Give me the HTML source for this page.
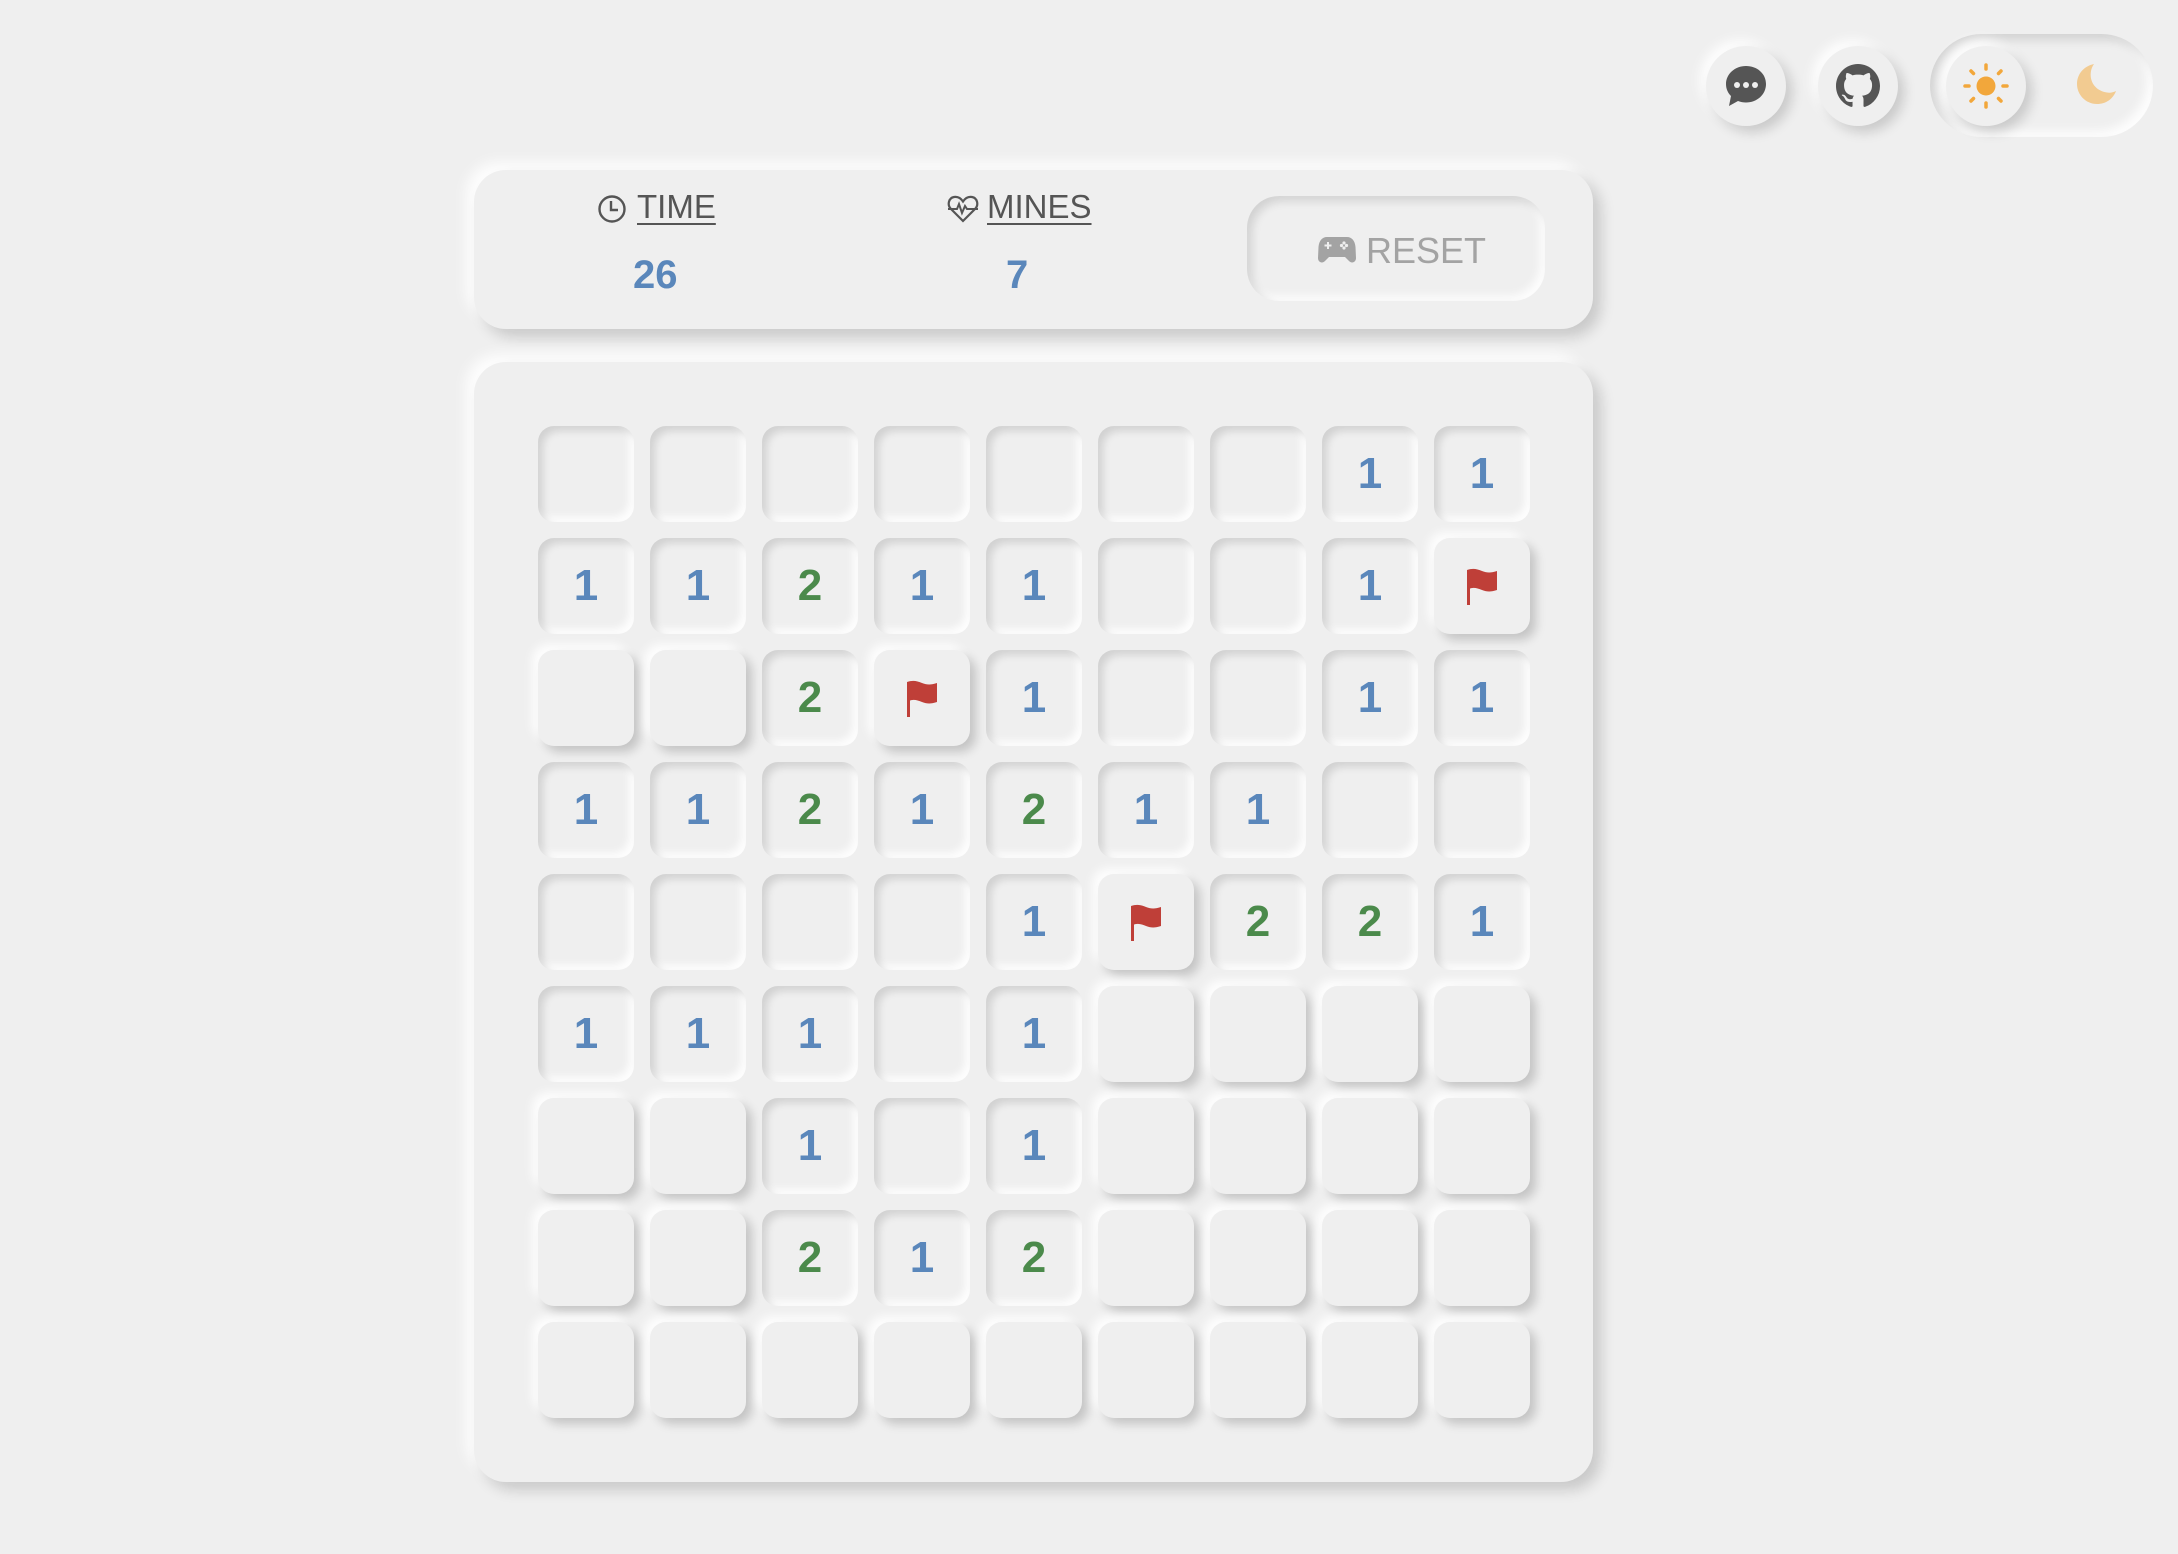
<!DOCTYPE html>
<html><head><meta charset="utf-8"><style>
html,body{margin:0;padding:0}
body{width:2178px;height:1554px;background:#efefef;position:relative;overflow:hidden;font-family:"Liberation Sans",sans-serif}
.card{position:absolute;background:#efefef;border-radius:32px;box-shadow:8px 8px 14px rgba(0,0,0,.16),-8px -8px 14px rgba(255,255,255,.9)}
.cell{position:absolute;width:96px;height:96px;border-radius:16px;background:#efefef;display:flex;align-items:center;justify-content:center;font-weight:bold;font-size:44px;line-height:1}
.in{box-shadow:inset 5px 5px 8px rgba(0,0,0,.12),inset -5px -5px 8px rgba(255,255,255,.9)}
.up{box-shadow:6px 6px 10px rgba(0,0,0,.18),-6px -6px 10px rgba(255,255,255,.9)}
.b{color:#5a87bb}.g{color:#4b8a4b}
.circ{position:absolute;width:80px;height:80px;border-radius:50%;background:#efefef;box-shadow:6px 6px 12px rgba(0,0,0,.16),-6px -6px 12px rgba(255,255,255,.95);display:flex;align-items:center;justify-content:center}
.lbl{position:absolute;font-size:33px;color:#555;text-decoration:underline;text-underline-offset:5px;text-decoration-thickness:2px;line-height:1}
.val{position:absolute;font-size:40px;font-weight:bold;color:#5a87bb;line-height:1}
</style></head><body>

<div class="circ" style="left:1706px;top:46px">
<svg width="44" height="44" viewBox="0 0 44 44"><path d="M22 2C11 2 2 10 2 20c0 5 2 9 5 12l-2 10 9-5c2.5 1 5 1.5 8 1.5 11 0 20-8 20-18.5S33 2 22 2z" fill="#555"/><circle cx="13" cy="21" r="3" fill="#efefef"/><circle cx="22" cy="21" r="3" fill="#efefef"/><circle cx="31" cy="21" r="3" fill="#efefef"/></svg>
</div>
<div class="circ" style="left:1818px;top:46px">
<svg width="44" height="44" viewBox="0 0 16 16"><path fill="#555" d="M8 0C3.58 0 0 3.58 0 8c0 3.540 2.29 6.53 5.47 7.59.4.07.55-.17.55-.38 0-.19-.01-.82-.01-1.49-2.01.37-2.53-.49-2.690-.94-.09-.23-.48-.94-.82-1.13-.28-.15-.68-.52-.01-.53.63-.01 1.08.58 1.23.82.72 1.21 1.87.87 2.33.66.07-.52.28-.87.51-1.07-1.78-.2-3.64-.89-3.64-3.95 0-.87.31-1.59.82-2.15-.08-.2-.36-1.02.08-2.12 0 0 .67-.21 2.2.82.64-.18 1.32-.27 2-.27.68 0 1.36.09 2 .27 1.53-1.04 2.2-.82 2.2-.82.44 1.1.16 1.92.08 2.12.51.56.82 1.27.82 2.15 0 3.07-1.87 3.75-3.65 3.95.29.25.54.73.54 1.48 0 1.07-.01 1.93-.01 2.2 0 .21.15.46.55.38A8.013 8.013 0 0016 8c0-4.42-3.58-8-8-8z"/></svg>
</div>
<div style="position:absolute;left:1930px;top:34px;width:223px;height:103px;border-radius:52px;background:#efefef;box-shadow:inset 6px 6px 10px rgba(0,0,0,.12),inset -6px -6px 10px rgba(255,255,255,.9)"></div>
<div class="circ" style="left:1946px;top:46px">
<svg width="46" height="46" viewBox="0 0 46 46"><circle cx="23" cy="23" r="9.5" fill="#f2a73b"/><g stroke="#f2a73b" stroke-width="3.5" stroke-linecap="round"><line x1="23" y1="2" x2="23" y2="6"/><line x1="23" y1="40" x2="23" y2="44"/><line x1="2" y1="23" x2="6" y2="23"/><line x1="40" y1="23" x2="44" y2="23"/><line x1="8" y1="8" x2="10.5" y2="10.5"/><line x1="35.5" y1="35.5" x2="38" y2="38"/><line x1="38" y1="8" x2="35.5" y2="10.5"/><line x1="8" y1="38" x2="10.5" y2="35.5"/></g></svg>
</div>
<svg style="position:absolute;left:2074px;top:62px" width="46" height="46" viewBox="0 0 46 46"><path d="M20 2C10 4 3 12 3 22c0 11 9 20 20 20 9 0 16-5 19-13-3 1.5-6 2-9 1.5C22 29 15 20 17 9c.5-2.5 1.5-5 3-7z" fill="#f2cb91"/></svg>

<div class="card" style="left:474px;top:170px;width:1119px;height:159px"></div>
<svg style="position:absolute;left:597px;top:194px" width="30" height="30" viewBox="0 0 30 30"><circle cx="15" cy="15" r="12.5" fill="none" stroke="#555" stroke-width="2.4"/><path d="M14 7v9h7" fill="none" stroke="#555" stroke-width="2.4"/></svg>
<div class="lbl" style="left:637px;top:190px">TIME</div>
<div class="val" style="left:633px;top:255px">26</div>
<svg style="position:absolute;left:947px;top:194px" width="32" height="30" viewBox="0 0 32 30"><path d="M16 27L4 15C0 11 1.5 4 7 3c4-.7 7 1.5 9 4.5 2-3 5-5.2 9-4.5 5.5 1 7 8 3 12z" fill="none" stroke="#555" stroke-width="2.2"/><path d="M1 15h9l2-5 3 9 3-7 2 3h11" fill="none" stroke="#555" stroke-width="2"/></svg>
<div class="lbl" style="left:987px;top:190px">MINES</div>
<div class="val" style="left:1006px;top:255px">7</div>
<div style="position:absolute;left:1247px;top:196px;width:298px;height:105px;border-radius:32px;box-shadow:inset 5px 5px 9px rgba(0,0,0,.12),inset -5px -5px 9px rgba(255,255,255,.9)"></div>
<svg style="position:absolute;left:1318px;top:236px" width="38" height="28" viewBox="0 0 38 28"><path d="M9 1h20c5 0 8 4 8.5 10l.5 11c0 4-4 6-7 3l-4-4H11l-4 4c-3 3-7 1-7-3l.5-11C1 5 4 1 9 1z" fill="#a3a3a3"/><path d="M10 6v7M6.5 9.5h7" stroke="#efefef" stroke-width="2"/><circle cx="26" cy="7" r="1.6" fill="#efefef"/><circle cx="26" cy="12" r="1.6" fill="#efefef"/><circle cx="23.5" cy="9.5" r="1.6" fill="#efefef"/><circle cx="28.5" cy="9.5" r="1.6" fill="#efefef"/></svg>
<div style="position:absolute;left:1366px;top:233px;font-size:36px;color:#a3a3a3;line-height:1">RESET</div>

<div class="card" style="left:474px;top:362px;width:1119px;height:1120px"></div>
<div id="g"></div>
<script>
var B=[
["i","i","i","i","i","i","i","i1","i1"],
["i1","i1","i2","i1","i1","i","i","i1","F"],
["u","u","i2","F","i1","i","i","i1","i1"],
["i1","i1","i2","i1","i2","i1","i1","i","i"],
["i","i","i","i","i1","F","i2","i2","i1"],
["i1","i1","i1","i","i1","u","u","u","u"],
["u","u","i1","i","i1","u","u","u","u"],
["u","u","i2","i1","i2","u","u","u","u"],
["u","u","u","u","u","u","u","u","u"]];
var flag='<svg width="34" height="38" viewBox="0 0 34 38"><path d="M2 3c6-2 10-1 15 1s9 2 15 0v19c-6 2-10 2-15 0s-9-3-13-1" fill="#bf3f38"/><rect x="2" y="3" width="3" height="35" fill="#bf3f38"/></svg>';
var h="";
for(var r=0;r<9;r++)for(var c=0;c<9;c++){var v=B[r][c],x=538+c*112,y=426+r*112,cls,t="";
if(v=="F"){cls="up";t=flag;}else if(v[0]=="u"){cls="up";}else{cls="in";if(v.length>1){t=v[1];cls+=v[1]=="1"?" b":" g";}}
h+='<div class="cell '+cls+'" style="left:'+x+'px;top:'+y+'px">'+t+'</div>';}
document.getElementById("g").innerHTML=h;
</script>
</body></html>
